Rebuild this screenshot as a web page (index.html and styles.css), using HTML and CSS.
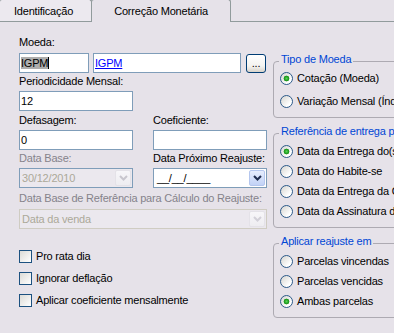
FILE: index.html
```html
<!DOCTYPE html>
<html lang="pt">
<head>
<meta charset="utf-8">
<link rel="stylesheet" href="styles.css">
</head>
<body>
<div class="tabs">
  <div class="tab tab-id">Identificação</div>
  <div class="tab tab-active">Correção Monetária</div>
</div>
<div class="panel">
  <div class="left">
    <div class="label">Moeda:</div>
    <div class="moeda-row">
      <div class="input w-code"><span class="sel">IGPM</span><span class="caret"></span></div>
      <div class="input w-name"><span class="link">IGPM</span></div>
      <div class="dots">...</div>
    </div>
    <div class="label mt2">Periodicidade Mensal:</div>
    <div class="input w-half mt3">12</div>

    <div class="pair mt3">
      <div class="col">
        <div class="label">Defasagem:</div>
        <div class="input mt3">0</div>
      </div>
      <div class="col">
        <div class="label">Coeficiente:</div>
        <div class="input mt3"></div>
      </div>
    </div>

    <div class="pair mt2">
      <div class="col">
        <div class="label dis">Data Base:</div>
        <div class="combo combo-dis mt3">
          <span class="val">30/12/2010</span>
          <span class="ddb ddb-dis"><svg width="9" height="6" viewBox="0 0 9 6"><path d="M1 1 L4.5 4.5 L8 1" fill="none" stroke="#C8C6CE" stroke-width="2"/></svg></span>
        </div>
      </div>
      <div class="col">
        <div class="label">Data Próximo Reajuste:</div>
        <div class="combo mt3">
          <span class="val mask">__/__/____</span>
          <span class="ddb"><svg width="9" height="6" viewBox="0 0 9 6"><path d="M1 1 L4.5 4.5 L8 1" fill="none" stroke="#1F2D4F" stroke-width="2"/></svg></span>
        </div>
      </div>
    </div>

    <div class="label dis mt4">Data Base de Referência para Cálculo do Reajuste:</div>
    <div class="combo combo-dis combo-light w-full mt4">
      <span class="val">Data da venda</span>
      <span class="ddb ddb-dis"><svg width="9" height="6" viewBox="0 0 9 6"><path d="M1 1 L4.5 4.5 L8 1" fill="none" stroke="#D2D0D8" stroke-width="2"/></svg></span>
    </div>

    <div class="checks">
      <div class="check"><span class="box"></span>Pro rata dia</div>
      <div class="check"><span class="box"></span>Ignorar deflação</div>
      <div class="check"><span class="box"></span>Aplicar coeficiente mensalmente</div>
    </div>
  </div>

  <div class="right">
    <div class="group g1">
      <span class="legend">Tipo de Moeda</span>
      <div class="radio"><span class="rb on"></span>Cotação (Moeda)</div>
      <div class="radio"><span class="rb"></span>Variação Mensal (Índice)</div>
    </div>
    <div class="group g2">
      <span class="legend">Referência de entrega prevista</span>
      <div class="radio"><span class="rb on"></span>Data da Entrega do(s) Imóvel(is)</div>
      <div class="radio"><span class="rb"></span>Data do Habite-se</div>
      <div class="radio"><span class="rb"></span>Data da Entrega da Obra</div>
      <div class="radio"><span class="rb"></span>Data da Assinatura do Contrato</div>
    </div>
    <div class="group g3">
      <span class="legend">Aplicar reajuste em</span>
      <div class="radio"><span class="rb"></span>Parcelas vincendas</div>
      <div class="radio"><span class="rb"></span>Parcelas vencidas</div>
      <div class="radio"><span class="rb on"></span>Ambas parcelas</div>
    </div>
  </div>
</div>
</body>
</html>
```

FILE: styles.css
```css
* { box-sizing: border-box; }
html, body {
  margin: 0;
  padding: 0;
  overflow: hidden;
  background: #E6E2E9;
}
body {
  width: 394px;
  height: 333px;
  font-family: "Liberation Sans", Arial, sans-serif;
  font-size: 11px;
  line-height: 13px;
  letter-spacing: -0.2px;
  color: #000;
}

/* tabs */
.tabs {
  display: flex;
  align-items: flex-start;
  height: 22px;
  margin-top: -1px;
}
.tab {
  height: 22px;
  padding-top: 5px;
  border: 1px solid #919B9C;
  border-bottom: none;
  border-radius: 3px 3px 0 0;
  white-space: nowrap;
}
.tab-id {
  width: 93px;
  margin-left: -1px;
  padding-left: 14px;
  background: #ECE9EF;
}
.tab-active {
  width: 140px;
  height: 23px;
  margin-left: -1px;
  text-align: center;
  background: #E6E2E9;
  position: relative;
  z-index: 1;
}

.panel {
  display: flex;
  border-top: 1px solid #919B9C;
}
.left {
  flex: none;
  width: 273px;
  padding: 14px 0 0 19px;
}
.right {
  flex: none;
  padding-top: 39px;
}

.mt2 { margin-top: 2px; }
.mt3 { margin-top: 3px; }
.mt4 { margin-top: 4px; }

.label {
  height: 13px;
  white-space: nowrap;
}
.label.dis { color: #85828B; }

.input {
  height: 20px;
  border: 1px solid #7F9DB9;
  background: #fff;
  padding: 0 1px;
  line-height: 18px;
  white-space: nowrap;
  overflow: hidden;
}
.moeda-row {
  display: flex;
  align-items: flex-start;
  margin-top: 4px;
}
.w-code { width: 70px; }
.w-name { width: 148px; margin-left: 4px; }
.w-half { width: 114px; }
.w-full { width: 248px; }
.sel { background: #ADADAD; }
.caret {
  display: inline-block;
  width: 1px;
  height: 12px;
  background: #000;
  vertical-align: -2px;
}
.link {
  color: #0000FF;
  text-decoration: underline;
}
.dots {
  width: 20px;
  height: 19px;
  margin: 1px 0 0 5px;
  border: 1px solid #003C74;
  border-radius: 3px;
  background: linear-gradient(#FFFFFF, #F4F3F0 65%, #D8D3CA);
  text-align: center;
  line-height: 16px;
}

.pair {
  display: flex;
  gap: 20px;
}
.col { width: 114px; }

.combo {
  display: flex;
  align-items: center;
  height: 20px;
  border: 1px solid #7F9DB9;
  background: #fff;
  padding: 0 1px 0 2px;
  white-space: nowrap;
}
.combo .val { flex: 1; overflow: hidden; }
.combo-dis {
  background: #EBE8EE;
  color: #ACA899;
}
.combo-light { border-color: #CFCCC2; }
.mask { padding-left: 1px; }
.ddb {
  flex: none;
  display: flex;
  align-items: center;
  justify-content: center;
  width: 16px;
  height: 16px;
  border: 1px solid #B4C6EE;
  border-radius: 2px;
  background: linear-gradient(#E6EDFD, #C2D2F6);
}
.ddb-dis {
  border-color: #E4E2E8;
  background: linear-gradient(#F7F6F9, #EEEDF1);
}

.checks { margin-top: 16px; }
.check {
  display: flex;
  align-items: center;
  gap: 4px;
  height: 22px;
  white-space: nowrap;
}
.box {
  flex: none;
  width: 13px;
  height: 13px;
  border: 1px solid #1C5180;
  background: linear-gradient(135deg, #DCDBD6, #FFFFFF);
}

/* groups */
.group {
  position: relative;
  width: 160px;
  border: 1px solid #ADAAB2;
  border-radius: 4px;
  padding-left: 6px;
}
.g1 { padding-top: 5px; padding-bottom: 4px; }
.g1 .radio { height: 23px; }
.g2, .g3 { margin-top: 15px; padding-top: 7px; padding-bottom: 6px; }
.g2 .radio, .g3 .radio { height: 20px; }
.legend {
  position: absolute;
  top: -9px;
  left: 5px;
  padding: 0 2px;
  background: #E6E2E9;
  color: #0046D5;
  white-space: nowrap;
}
.radio {
  display: flex;
  align-items: center;
  gap: 4px;
  white-space: nowrap;
}
.rb {
  flex: none;
  width: 13px;
  height: 13px;
  border-radius: 50%;
  border: 1px solid #2C5A8A;
  background: linear-gradient(135deg, #D6D5D0, #FFFFFF 75%);
}
.rb.on {
  background:
    radial-gradient(circle at 50% 50%, #5BD35B 0, #21A121 2px, #1E8E1E 2.6px, transparent 3.2px),
    linear-gradient(135deg, #D6D5D0, #FFFFFF 75%);
}
```
